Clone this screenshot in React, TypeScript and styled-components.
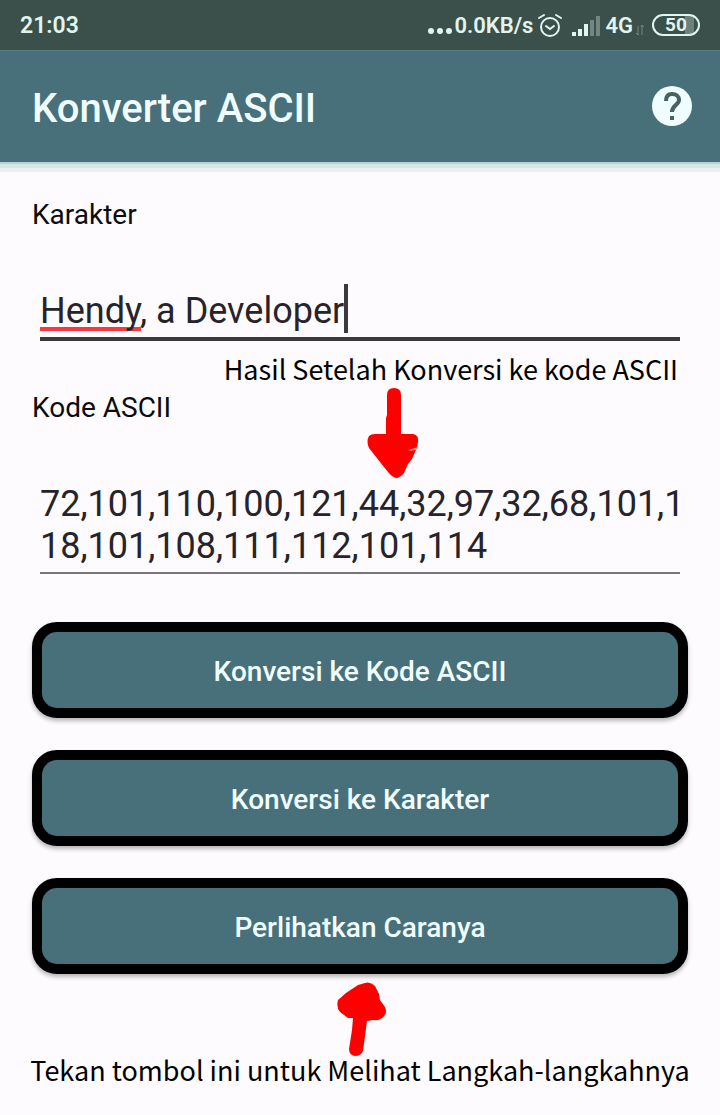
import React, { useState } from "react";
import styled, { createGlobalStyle } from "styled-components";

const GlobalStyle = createGlobalStyle`
  *, *::before, *::after { box-sizing: border-box; }
  body {
    margin: 0;
    background: #fdfbfe;
    color: #0c0c0e;
    font-family: Roboto, "Liberation Sans", sans-serif;
  }
`;

const Screen = styled.div`
  display: flex;
  flex-direction: column;
`;

const StatusBar = styled.div`
  display: flex;
  align-items: center;
  justify-content: space-between;
  height: 50px;
  padding: 2px 20px 0;
  background: #3b504a;
  color: #e2f4ee;
  font-size: 23px;
  font-weight: 600;
  line-height: 28px;
`;

const StatusGroup = styled.div`
  display: flex;
  align-items: center;
  font-size: 22px;
`;

const NetworkGroup = styled.div`
  display: flex;
  align-items: center;
  gap: 3px;
  margin: 0 8px 0 9px;
`;

const Speed = styled.span`
  margin-right: 4px;
`;

const Battery = styled.div`
  display: flex;
  align-items: center;
  justify-content: center;
  width: 48px;
  height: 22px;
  margin-bottom: 2px;
  border: 2px solid #e2f4ee;
  border-radius: 11px;
  background: linear-gradient(90deg, transparent 70%, #6d817b 70%, #6d817b 90%, transparent 90%);
  font-size: 19px;
  font-weight: 700;
  line-height: 20px;
`;

const AppBar = styled.header`
  display: flex;
  align-items: center;
  justify-content: space-between;
  height: 112px;
  padding: 0 28px 0 32px;
  background: #48707a;
  border-top: 1px solid #567d84;
  box-shadow: 0 2px 0 #b9d0cc, 0 6px 0 #d3e8e4, 0 10px 0 #eeedf0;
`;

const Title = styled.h1`
  margin: 4px 0 0;
  color: #effdff;
  font-size: 40px;
  font-weight: 500;
  line-height: 48px;
`;

const HelpButton = styled.button`
  display: flex;
  padding: 0 0 2px;
  border: 0;
  background: none;
`;

const Content = styled.main`
  display: flex;
  flex-direction: column;
  padding: 35px 32px 24px;
`;

const Label = styled.label`
  font-size: 28px;
  line-height: 36px;
`;

const Field = styled.div`
  display: flex;
  align-items: center;
  height: 57px;
  margin: 51px 8px 12px;
  padding-bottom: 4px;
  border-bottom: 4px solid #3a393d;
`;

const TextInput = styled.input`
  field-sizing: content;
  min-width: 4px;
  max-width: calc(100% - 4px);
  height: 48px;
  padding: 4px 0 0;
  border: 0;
  outline: 0;
  background: linear-gradient(#fb3640, #fb3640) 0 42px / 101px 4px no-repeat;
  color: #26242a;
  caret-color: transparent;
  font: 400 36px/44px Roboto, "Liberation Sans", sans-serif;
`;

const Caret = styled.span`
  width: 4px;
  height: 49px;
  background: #3a393d;
`;

const CodeField = styled.div`
  height: 91px;
  margin: 57px 8px 48px;
  border-bottom: 2px solid #77747a;
`;

const CodeArea = styled.textarea`
  display: block;
  width: calc(100% + 8px);
  height: 88px;
  padding: 0;
  border: 0;
  outline: 0;
  background: none;
  color: #26242a;
  font: 400 36px/42px Roboto, "Liberation Sans", sans-serif;
  overflow: hidden;
  resize: none;
  word-break: break-all;
`;

const Actions = styled.div`
  display: grid;
  gap: 32px;
`;

const ActionButton = styled.button`
  height: 96px;
  padding: 4px 6px 0;
  border: 10px solid #000;
  border-radius: 25px;
  background: #48707a;
  box-shadow: 0 3px 4px rgba(0, 0, 0, 0.28);
  color: #effdff;
  font: 500 28px/36px Roboto, "Liberation Sans", sans-serif;
`;

const noteFont = `"Noto Sans CJK SC", "Open Sans", sans-serif`;

const ResultNote = styled.div`
  position: relative;
  margin-bottom: 5px;
  padding-right: 10px;
  color: #000;
  font: 400 27px/32px ${noteFont};
  text-align: right;
`;

const DownArrow = styled.svg`
  position: absolute;
  top: 100%;
  left: calc(50% + 7px);
  margin-top: 2px;
`;

const StepsNote = styled.div`
  display: flex;
  flex-direction: column;
  align-items: center;
  margin-top: 7px;
  color: #000;
  font: 400 27px/28px ${noteFont};
  white-space: nowrap;
`;

const AlarmIcon = () => (
  <svg width="26" height="26" viewBox="0 0 26 26" fill="none" stroke="#e2f4ee" strokeWidth="2" strokeLinecap="round" aria-hidden="true">
    <circle cx="13" cy="14" r="9" />
    <path d="M9 13l4 3 4-3M2 5l5-3M19 2l5 3" />
  </svg>
);

const SignalIcon = () => (
  <svg width="30" height="20" viewBox="0 0 30 20" aria-hidden="true">
    <path fill="#e2f4ee" d="M0 16h4v4H0zM6 13h4v7H6zM12 8h4v12h-4z" />
    <path fill="#71867f" d="M18 4h4v16h-4zM24 0h4v20h-4z" />
  </svg>
);

const DataIcon = () => (
  <svg width="8" height="20" viewBox="0 -8 8 20" fill="none" stroke="#71867f" strokeWidth="1" aria-hidden="true">
    <path d="M2 2v9M0 9l2 2 1-1M6 11V1M5 3l1-2 2 2" />
  </svg>
);

const DotsIcon = () => (
  <svg width="26" height="20" viewBox="0 0 26 20" fill="#e2f4ee" aria-hidden="true">
    <circle cx="3" cy="15" r="3" />
    <circle cx="12" cy="15" r="3" />
    <circle cx="21" cy="15" r="3" />
  </svg>
);

const HelpIcon = () => (
  <svg width="40" height="40" viewBox="0 0 40 40" aria-hidden="true">
    <circle cx="20" cy="20" r="20" fill="#effdff" />
    <path d="M14 15C14 10 16 8 20 8S27 10 27 14C27 19 20 19 20 26" fill="none" stroke="#48605f" strokeWidth="4" />
    <path d="M18 30h4v4h-4z" fill="#48605f" />
  </svg>
);

export default function App() {
  const [text, setText] = useState("Hendy, a Developer");
  const [code, setCode] = useState("72,101,110,100,121,44,32,97,32,68,101,118,101,108,111,112,101,114");

  const toCode = () => setCode(Array.from(text, (c) => c.charCodeAt(0)).join(","));
  const toText = () => setText(String.fromCharCode(...code.split(",").map(Number)));

  return (
    <Screen>
      <GlobalStyle />
      <StatusBar>
        <span>21:03</span>
        <StatusGroup>
          <DotsIcon />
          <Speed>0.0KB/s</Speed>
          <AlarmIcon />
          <NetworkGroup>
            <SignalIcon />
            <span>4G</span>
            <DataIcon />
          </NetworkGroup>
          <Battery>50</Battery>
        </StatusGroup>
      </StatusBar>
      <AppBar>
        <Title>Konverter ASCII</Title>
        <HelpButton type="button" aria-label="Bantuan">
          <HelpIcon />
        </HelpButton>
      </AppBar>
      <Content>
        <Label htmlFor="karakter">Karakter</Label>
        <Field>
          <TextInput id="karakter" spellCheck={false} value={text} onChange={(e) => setText(e.target.value)} />
          <Caret />
        </Field>
        <ResultNote>
          Hasil Setelah Konversi ke kode ASCII
          <DownArrow width="52" height="92" viewBox="0 0 52 92" fill="#fe0000" aria-hidden="true">
            <path d="M20 8Q20 1 27 1T34 8V47H46Q52 48 51 55Q51 60 48 65L45 72L41 77L37 86Q33 91 29 91Q25 90 21 85L13 75L2 61Q-1 54 2 49Q4 47 8 47H19V31L20 28Z" />
            <path d="M41 63L51 60V62L44 64Z" fill="#ff8a80" />
          </DownArrow>
        </ResultNote>
        <Label htmlFor="kode">Kode ASCII</Label>
        <CodeField>
          <CodeArea id="kode" rows={2} spellCheck={false} value={code} onChange={(e) => setCode(e.target.value)} />
        </CodeField>
        <Actions>
          <ActionButton type="button" onClick={toCode}>Konversi ke Kode ASCII</ActionButton>
          <ActionButton type="button" onClick={toText}>Konversi ke Karakter</ActionButton>
          <ActionButton type="button">Perlihatkan Caranya</ActionButton>
        </Actions>
        <StepsNote>
          <svg width="54" height="75" viewBox="-4 0 54 75" fill="#fe0000" aria-hidden="true">
            <path d="M21 4L28 2Q33 0 38 5L42 13L43 19L48 26Q51 33 45 37Q42 40 36 39L30 40L26 70Q24 75 18 75Q12 74 12 68L15 49L16 37H11L3 31Q-1 26 1 19L9 12Z" />
          </svg>
          <span>Tekan tombol ini untuk Melihat Langkah-langkahnya</span>
        </StepsNote>
      </Content>
    </Screen>
  );
}
